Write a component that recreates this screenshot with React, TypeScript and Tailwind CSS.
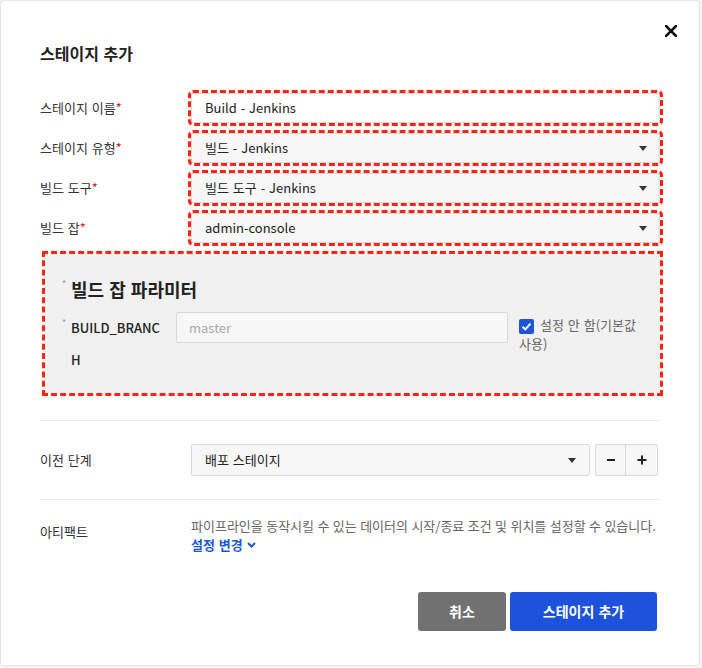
import React from 'react';

const font = { fontFamily: '"Noto Sans CJK KR", "Noto Sans", sans-serif' };

function Caret() {
  return (
    <svg width="8" height="5" viewBox="0 0 8 5" className="shrink-0">
      <path d="M0 0 L8 0 L4 5 Z" fill="#333" />
    </svg>
  );
}

function Label({ text, required }: { text: string; required?: boolean }) {
  return (
    <div className="w-[151px] shrink-0 text-[13px] text-[#333] [word-spacing:1px]">
      {text}
      {required && <span className="text-[#e0201a]">*</span>}
    </div>
  );
}

function Select({ value }: { value: string }) {
  return (
    <div className="flex-1 h-[30px] flex items-center justify-between pl-[13px] pr-[12px] bg-[#f7f7f7] border border-[#d9d9d9] rounded-[2px] outline-3 outline-dashed outline-[#ff2314] text-[13px] text-[#222] [word-spacing:1px]">
      <span>{value}</span>
      <Caret />
    </div>
  );
}

export default function App() {
  return (
    <div className="w-[702px] h-[668px] bg-[#f6f6f6]" style={font}>
      <div className="relative w-[700px] h-[666px] bg-white border border-[#e4e4e4] rounded-[3px] px-[39px] pt-[40px]">
        <button className="absolute right-[22px] top-[24px] w-[12px] h-[12px]">
          <svg width="12" height="12" viewBox="0 0 12 12">
            <path d="M1 1 L11 11 M11 1 L1 11" stroke="#111" strokeWidth="2.6" strokeLinecap="square" />
          </svg>
        </button>

        <h2 className="text-[16px] leading-[24px] font-bold text-[#222] [word-spacing:1px]">스테이지 추가</h2>

        <div className="mt-[28px] flex flex-col gap-[10px]">
          <div className="flex items-center">
            <Label text="스테이지 이름" required />
            <div className="flex-1 h-[30px] flex items-center pl-[13px] bg-white border border-[#d9d9d9] rounded-[2px] outline-3 outline-dashed outline-[#ff2314] text-[13px] text-[#222] [word-spacing:1px]">
              Build - Jenkins
            </div>
          </div>
          <div className="flex items-center">
            <Label text="스테이지 유형" required />
            <Select value="빌드 - Jenkins" />
          </div>
          <div className="flex items-center">
            <Label text="빌드 도구" required />
            <Select value="빌드 도구 - Jenkins" />
          </div>
          <div className="flex items-center">
            <Label text="빌드 잡" required />
            <Select value="admin-console" />
          </div>
        </div>

        <div className="mt-[11px] ml-[5px] w-[615px] h-[139px] bg-[#f1f1f1] outline-3 outline-dashed outline-[#ff2314] pl-[17px] pt-[22px]">
          <div className="flex items-start">
            <span className="w-[9px] text-[9px] leading-[16px] text-[#999]">*</span>
            <span className="text-[18px] leading-[26px] font-bold text-[#222] [word-spacing:1px]">빌드 잡 파라미터</span>
          </div>
          <div className="mt-[10px] flex items-start">
            <span className="w-[9px] text-[9px] leading-[22px] text-[#999]">*</span>
            <div className="w-[95px] mr-[10px] text-[13px] leading-[32px] font-medium text-[#222] break-all">BUILD_BRANCH</div>
            <div className="w-[332px] h-[31px] flex items-center pl-[12px] bg-[#f7f7f7] border border-[#d9d9d9] rounded-[2px] text-[13px] text-[#aaa]">
              master
            </div>
            <div className="ml-[11px] w-[130px] mt-[3px] text-[13px] leading-[19px] text-[#666] break-keep [word-spacing:1px]">
              <span className="inline-flex align-[-2px] items-center justify-center w-[15px] h-[15px] mr-[6px] rounded-[2px] bg-[#1b55dc]">
                <svg width="11" height="11" viewBox="0 0 11 11">
                  <path d="M1.5 5.8 L4.3 8.4 L9.5 2.6" stroke="#fff" strokeWidth="2" fill="none" />
                </svg>
              </span>
              설정 안 함(기본값 사용)
            </div>
          </div>
        </div>

        <div className="mt-[27px] h-px bg-[#ebebeb]" />

        <div className="py-[23px] flex items-center">
          <div className="w-[151px] shrink-0 text-[13px] text-[#333] [word-spacing:1px]">이전 단계</div>
          <div className="w-[399px] h-[32px] flex items-center justify-between pl-[13px] pr-[13px] bg-[#f7f7f7] border border-[#d9d9d9] rounded-[2px] text-[13px] text-[#222] [word-spacing:1px]">
            <span>배포 스테이지</span>
            <Caret />
          </div>
          <div className="ml-[5px] flex h-[32px] border border-[#d9d9d9] rounded-[2px] bg-[#f7f7f7]">
            <button className="w-[30px] h-full flex items-center justify-center border-r border-[#d9d9d9]">
              <svg width="10" height="10" viewBox="0 0 10 10"><path d="M1 5 H9" stroke="#222" strokeWidth="2" /></svg>
            </button>
            <button className="w-[31px] h-full flex items-center justify-center">
              <svg width="10" height="10" viewBox="0 0 10 10"><path d="M0.5 5 H9.5 M5 0.5 V9.5" stroke="#222" strokeWidth="2" /></svg>
            </button>
          </div>
        </div>

        <div className="h-px bg-[#ebebeb]" />

        <div className="pt-[16px] flex items-start">
          <div className="w-[151px] shrink-0 pt-[6px] text-[13px] leading-[19px] text-[#333]">아티팩트</div>
          <div className="flex-1 text-[13px] leading-[19px]">
            <p className="text-[#666] whitespace-nowrap [word-spacing:0.5px]">파이프라인을 동작시킬 수 있는 데이터의 시작/종료 조건 및 위치를 설정할 수 있습니다.</p>
            <button className="flex items-center gap-[4px] font-bold text-[#1b55dc] [word-spacing:1px]">
              설정 변경
              <svg width="9" height="6" viewBox="0 0 9 6"><path d="M1 1 L4.5 4.5 L8 1" stroke="#1b55dc" strokeWidth="2" fill="none" /></svg>
            </button>
          </div>
        </div>

        <div className="mt-[38px] pr-[3px] flex justify-end gap-[4px]">
          <button className="w-[88px] h-[39px] rounded-[3px] bg-[#717171] text-white text-[14px] font-bold">취소</button>
          <button className="w-[147px] h-[39px] rounded-[3px] bg-[#1d52dd] text-white text-[14px] font-bold [word-spacing:1px]">스테이지 추가</button>
        </div>
      </div>
    </div>
  );
}
